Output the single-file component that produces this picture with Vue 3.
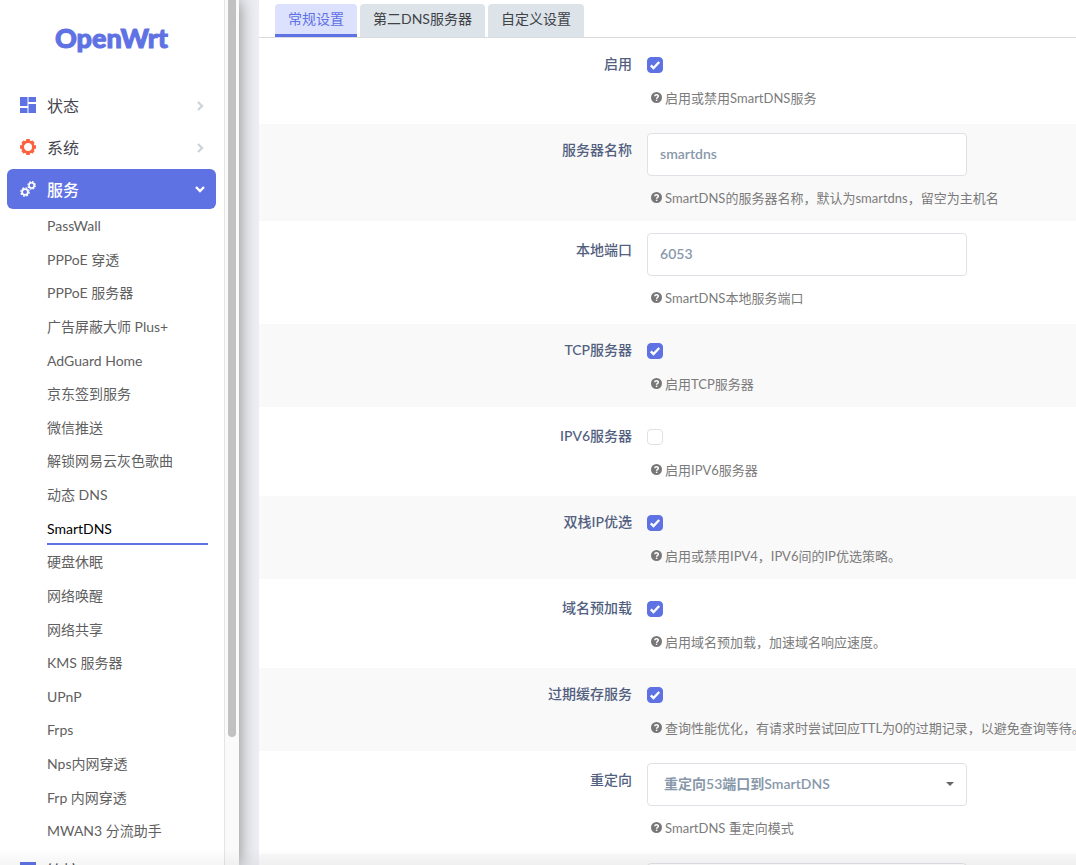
<script setup>
import { ref } from 'vue'

const services = [
  'PassWall', 'PPPoE 穿透', 'PPPoE 服务器', '广告屏蔽大师 Plus+', 'AdGuard Home',
  '京东签到服务', '微信推送', '解锁网易云灰色歌曲', '动态 DNS', 'SmartDNS',
  '硬盘休眠', '网络唤醒', '网络共享', 'KMS 服务器', 'UPnP', 'Frps',
  'Nps内网穿透', 'Frp 内网穿透', 'MWAN3 分流助手'
]
const current = 'SmartDNS'

const tabs = ['常规设置', '第二DNS服务器', '自定义设置']
const activeTab = ref(0)

const fields = ref([
  { id: 'enabled', type: 'check', label: '启用', value: true, help: '启用或禁用SmartDNS服务' },
  { id: 'name', type: 'text', label: '服务器名称', value: 'smartdns', help: 'SmartDNS的服务器名称，默认为smartdns，留空为主机名' },
  { id: 'port', type: 'text', label: '本地端口', value: '6053', help: 'SmartDNS本地服务端口' },
  { id: 'tcp', type: 'check', label: 'TCP服务器', value: true, help: '启用TCP服务器' },
  { id: 'ipv6', type: 'check', label: 'IPV6服务器', value: false, help: '启用IPV6服务器' },
  { id: 'dual', type: 'check', label: '双栈IP优选', value: true, help: '启用或禁用IPV4，IPV6间的IP优选策略。' },
  { id: 'prefetch', type: 'check', label: '域名预加载', value: true, help: '启用域名预加载，加速域名响应速度。' },
  { id: 'expired', type: 'check', label: '过期缓存服务', value: true, help: '查询性能优化，有请求时尝试回应TTL为0的过期记录，以避免查询等待。' },
  { id: 'redirect', type: 'select', label: '重定向', value: '重定向53端口到SmartDNS', help: 'SmartDNS 重定向模式' },
  { id: 'cache', type: 'text', label: '', value: '', help: '' }
])
</script>

<template>
  <div class="shell">
    <aside class="sidebar">
      <div class="scroll">
        <a class="brand" href="#">OpenWrt</a>
        <nav>
          <ul class="menu">
            <li>
              <a class="entry" href="#">
                <svg class="icon indigo" viewBox="0 0 16 16"><path d="M0 0h7.500v9H0zM8.500 0H16v5H8.500zM0 11h7.500v5H0zM8.500 7H16v9H8.500z" /></svg>
                <span>状态</span>
                <svg class="arrow" viewBox="0 0 12 12"><path d="M4 3l4 4-4 4" /></svg>
              </a>
            </li>
            <li>
              <a class="entry" href="#">
                <svg class="icon orange" viewBox="0 0 16 16">
                  <circle cx="8" cy="8" r="5.4" fill="none" stroke="currentColor" stroke-width="2.800" />
                  <path d="M6.200 0h3.600v2H6.200zM6.200 14h3.600v2H6.200zM0 6.200h2v3.600H0zM14 6.200h2v3.600h-2zM1.300 3.800l2.500-2.500 1.500 1.500-2.500 2.500zM12.200 1.300l2.500 2.500-1.500 1.500-2.500-2.500zM1.300 12.200l1.500-1.500 2.500 2.500-1.500 1.500zM13.200 10.700l1.500 1.500-2.500 2.500-1.500-1.500z" />
                </svg>
                <span>系统</span>
                <svg class="arrow" viewBox="0 0 12 12"><path d="M4 3l4 4-4 4" /></svg>
              </a>
            </li>
            <li>
              <a class="entry open" href="#">
                <svg class="icon" viewBox="0 0 16 16">
                  <g fill="none" stroke="currentColor">
                    <circle cx="5" cy="11" r="2.9" stroke-width="1.8" />
                    <circle cx="5" cy="11" r="4.2" stroke-width="1.2" stroke-dasharray="1.9 1.4" />
                    <circle cx="11.6" cy="4.4" r="2.6" stroke-width="1.6" />
                    <circle cx="11.6" cy="4.4" r="3.7" stroke-width="1.2" stroke-dasharray="1.7 1.2" />
                  </g>
                </svg>
                <span>服务</span>
                <svg class="arrow" viewBox="0 0 12 12"><path d="M2 4l4 4 4-4" /></svg>
              </a>
              <ul class="submenu">
                <li v-for="s in services" :key="s">
                  <a :class="{ current: s === current }" href="#">{{ s }}</a>
                </li>
              </ul>
            </li>
            <li>
              <a class="entry" href="#">
                <svg class="icon indigo" viewBox="0 0 16 16"><path d="M0 0h16v16H0z" /></svg>
                <span>管控</span>
                <svg class="arrow" viewBox="0 0 12 12"><path d="M4 3l4 4-4 4" /></svg>
              </a>
            </li>
          </ul>
        </nav>
      </div>
      <div class="track"><div class="thumb"></div></div>
    </aside>

    <main class="page">
      <section class="panel">
        <div class="tabs" role="tablist">
          <button
            v-for="(t, i) in tabs"
            :key="t"
            type="button"
            role="tab"
            :aria-selected="i === activeTab"
            :class="['tab', { active: i === activeTab }]"
            @click="activeTab = i"
          >{{ t }}</button>
        </div>
        <form class="rows">
          <div v-for="f in fields" :key="f.id" class="row">
            <label class="title" :for="f.id">{{ f.label }}</label>
            <div class="field">
              <span v-if="f.type === 'check'" class="box">
                <input :id="f.id" v-model="f.value" type="checkbox" />
                <svg v-if="f.value" viewBox="0 0 16 16"><path d="M3.800 8.300l2.700 2.700 5.700-6" /></svg>
              </span>
              <span v-else-if="f.type === 'select'" class="picker">
                <select :id="f.id" v-model="f.value" class="control">
                  <option>重定向53端口到SmartDNS</option>
                </select>
                <svg viewBox="0 0 8 4"><path d="M0 0h8L4 4z" /></svg>
              </span>
              <input v-else :id="f.id" v-model="f.value" class="control" type="text" />
              <p v-if="f.help" class="help">
                <svg viewBox="0 0 12 12">
                  <circle cx="6" cy="6" r="6" />
                  <path d="M4.1 4.7c0-2.4 3.9-2.3 3.9-.1 0 1.3-1.9 1.3-1.9 2.7" />
                  <path d="M6.1 8.3v1.5" />
                </svg>
                <span>{{ f.help }}</span>
              </p>
            </div>
          </div>
        </form>
      </section>
    </main>
    <div class="fade"></div>
  </div>
</template>

<style>
body {
  margin: 0;
  background: #edeef3;
}
</style>

<style scoped>
* {
  box-sizing: border-box;
}

.shell {
  position: relative;
  display: flex;
  height: 100vh;
  overflow: hidden;
  font-family: Lato, "Noto Sans CJK SC", sans-serif;
  font-size: 14px;
}

ul {
  list-style: none;
  margin: 0;
  padding: 0;
}

a {
  text-decoration: none;
}

.sidebar {
  position: relative;
  z-index: 1;
  flex: none;
  display: flex;
  width: 239px;
  background: #fff;
  box-shadow: 0 0 16px rgba(0, 0, 0, 0.45);
}

.scroll {
  flex: 1;
  overflow: hidden;
  padding: 0 8px 0 7px;
}

.brand {
  display: block;
  padding: 14px 0 23px;
  line-height: 48px;
  text-align: center;
  font-size: 27px;
  font-weight: 900;
  -webkit-text-stroke: 1px #5e72e4;
  color: #5e72e4;
}

.menu {
  display: flex;
  flex-direction: column;
  gap: 2px;
}

.entry {
  display: flex;
  align-items: center;
  gap: 11px;
  height: 40px;
  padding: 0 10px 0 13px;
  border-radius: 6px;
  font-size: 16px;
  color: #45454f;
}

.entry span {
  flex: 1;
  padding-bottom: 1px;
}

.entry.open {
  background: #5e72e4;
  color: #fff;
  font-weight: 500;
}

.icon {
  width: 16px;
  height: 16px;
  fill: currentColor;
}

.indigo {
  color: #5e72e4;
}

.orange {
  color: #fb6340;
}

.arrow {
  width: 12px;
  height: 12px;
  fill: none;
  stroke: #ced4da;
  stroke-width: 2.4;
}

.open .arrow {
  stroke: #fff;
}

.submenu {
  display: grid;
  grid-auto-rows: 1fr;
  height: 639px;
  padding: 0 8px 0 40px;
}

.submenu a {
  display: block;
  height: 100%;
  line-height: 33px;
  color: #5f5f5f;
}

.submenu .current {
  box-shadow: inset 0 -2px #5e72e4;
  color: #000;
}

.track {
  width: 15px;
  padding: 0 3px;
  border-left: 1px solid #e4e4e4;
  background: #fafafa;
}

.thumb {
  width: 8px;
  height: 737px;
  border-radius: 0 0 4px 4px;
  background: #c1c1c1;
}

.page {
  flex: 1;
  min-width: 0;
  padding-left: 20px;
  background: #edeef3;
}

.panel {
  background: #fff;
}

.tabs {
  display: flex;
  gap: 3px;
  padding: 4px 16px 0;
  border-bottom: 1px solid #d9dbdd;
}

.tab {
  height: 33px;
  padding: 0 13px 6px;
  border: 0;
  border-radius: 4px 4px 0 0;
  background: #dce3e9;
  font: inherit;
  color: #404248;
}

.tab.active {
  padding-bottom: 3px;
  border-bottom: 3px solid #5e72e4;
  background: #dce1fe;
  color: #5e72e4;
}

.rows {
  display: flex;
  flex-direction: column;
  gap: 3px;
}

.row {
  display: flex;
  padding: 9px 0 11px;
}

.row:nth-child(even) {
  background: #f9f9f9;
}

.title {
  flex: none;
  width: 47.5%;
  padding: 7px 15px 0 0;
  line-height: 20px;
  text-align: right;
  font-weight: 500;
  color: #525f7f;
}

.field {
  flex: 1;
  min-width: 0;
}

.box {
  display: grid;
  width: 16px;
  height: 16px;
  margin: 10px 0 14px;
}

.box input,
.box svg {
  grid-area: 1 / 1;
  width: 16px;
  height: 16px;
  margin: 0;
}

.box input {
  appearance: none;
  border: 1px solid #dee2e6;
  border-radius: 4px;
  background: #fff;
}

.box input:checked {
  border-color: #5e72e4;
  background: #5e72e4;
}

.box svg {
  pointer-events: none;
  fill: none;
  stroke: #fff;
  stroke-width: 2.4;
}

.control {
  display: block;
  width: 320px;
  max-width: 100%;
  height: 43px;
  margin: 0 0 11px;
  padding: 0 12px 2px;
  border: 1px solid #dee2e6;
  border-radius: 4px;
  background: #fff;
  font-family: inherit;
  font-size: 14px;
  font-weight: 600;
  color: #8898aa;
}

.picker {
  display: grid;
  width: 320px;
}

.picker .control,
.picker svg {
  grid-area: 1 / 1;
}

.picker .control {
  appearance: none;
  padding: 0 16px 2px;
}

.picker svg {
  justify-self: end;
  width: 8px;
  height: 4px;
  margin: 19px 13px 0 0;
  pointer-events: none;
  fill: #666;
}

.help {
  display: flex;
  align-items: center;
  gap: 3px;
  margin: 0;
  padding-left: 4px;
  line-height: 23px;
  white-space: nowrap;
  font-size: 13px;
  color: #7b7b7b;
}

.help svg {
  flex: none;
  width: 11px;
  height: 11px;
  margin-bottom: 2px;
}

.help circle {
  fill: #777;
}

.help path {
  fill: none;
  stroke: #fff;
  stroke-width: 1.6;
}

.fade {
  position: absolute;
  z-index: 2;
  right: 0;
  bottom: 0;
  left: 0;
  height: 16px;
  pointer-events: none;
  background: linear-gradient(rgba(0, 0, 0, 0), rgba(0, 0, 0, 0.04));
}
</style>
